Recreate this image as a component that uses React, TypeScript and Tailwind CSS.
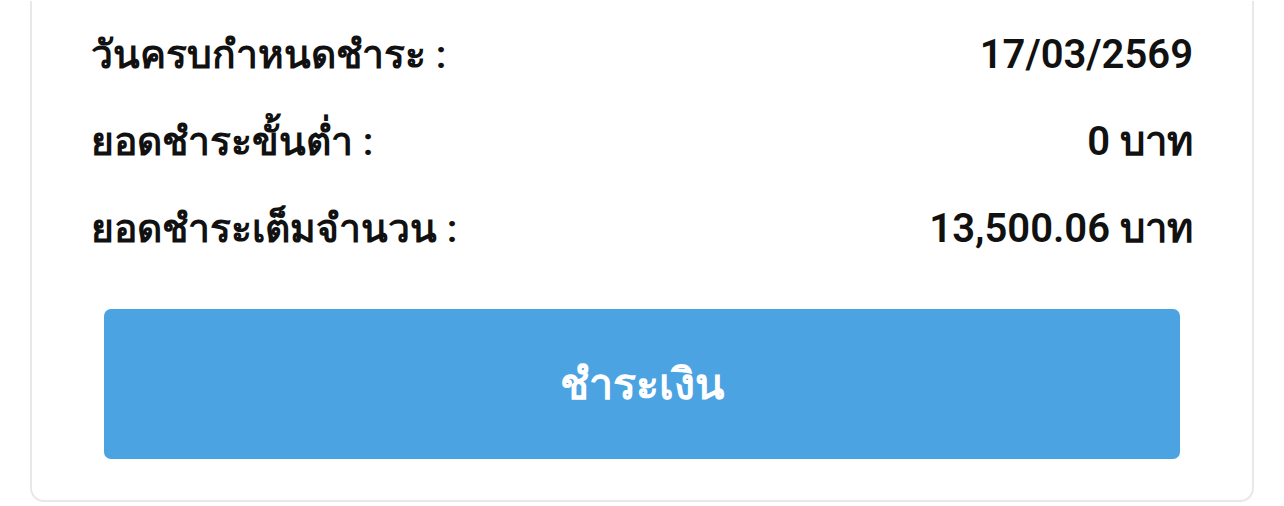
const rows = [
  { label: 'วันครบกำหนดชำระ :', value: '17/03/2569' },
  { label: 'ยอดชำระขั้นต่ำ :', value: '0 บาท' },
  { label: 'ยอดชำระเต็มจำนวน :', value: '13,500.06 บาท' },
];

export default function App() {
  return (
    <div className="w-[1284px] h-[506px] bg-white px-[30px] pb-[4px] flex flex-col justify-end font-['Roboto','Noto_Sans',sans-serif]">
      <div className="bg-white border-x-2 border-b-2 border-[#e8e8e8] rounded-b-[14px] pt-[30px] pb-[41px]">
        <div className="flex flex-col gap-[39px] px-[59px]">
          {rows.map((r) => (
            <div key={r.label} className="flex items-center justify-between h-[48px] text-[40px] leading-[48px] font-semibold text-[#111111]">
              <span className="text-[39px]">{r.label}</span>
              <span>{r.value}</span>
            </div>
          ))}
        </div>
        <div className="px-[72px] mt-[56px]">
          <button className="w-full h-[150px] rounded-[7px] bg-[#4ba3e2] text-white text-[43px] font-semibold flex items-center justify-center">
            ชำระเงิน
          </button>
        </div>
      </div>
    </div>
  );
}
